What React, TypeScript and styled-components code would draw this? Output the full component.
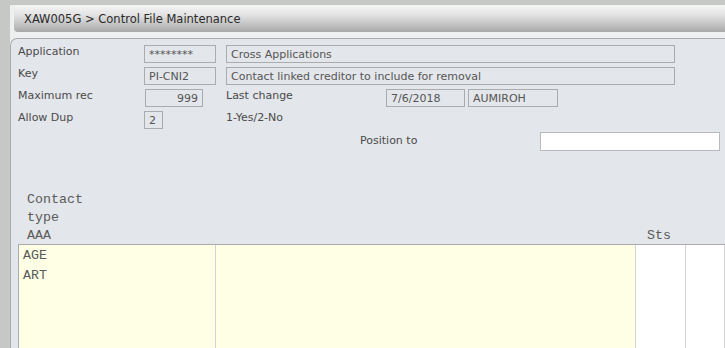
import React from 'react';
import styled, { createGlobalStyle } from 'styled-components';

const GlobalStyle = createGlobalStyle`
    html, body {
        margin: 0;
        height: 100%;
        overflow: hidden;
        background: #c6c8c6;
    }
`

const Page = styled.div`
    height: 100vh;
    padding: 5px 0 0 10px;
    box-sizing: border-box;
    display: flex;
    flex-direction: column;
    font-family: 'DejaVu Sans', Verdana, sans-serif;
    font-size: 11px;
    color: #4a4a4a;
`

const Screen = styled.div`
    flex: 1;
    display: flex;
    flex-direction: column;
    background: #eef0f0;
    min-height: 0;
`

const TitleBar = styled.div`
    height: 27px;
    margin-left: 4px;
    padding-left: 10px;
    display: flex;
    align-items: center;
    border-radius: 4px 0 0 4px;
    background: linear-gradient(#f5f5f5 0%, #e4e4e4 35%, #bcbcbc 80%, #a8a8a8 100%);
    color: #2a2a2a;
    font-size: 11.5px;
`

const Panel = styled.div`
    flex: 1;
    margin-top: 6px;
    border: 1px solid #a9abad;
    border-right: none;
    border-bottom: none;
    border-radius: 7px 0 0 0;
    background: #e3e6ea;
    padding: 6px 0 0 7px;
    display: flex;
    flex-direction: column;
    min-height: 0;
`

const Row = styled.div`
    display: flex;
    align-items: flex-start;
    height: 22px;
`

const Label = styled.div<{ $w: number; $gap?: number }>`
    width: ${p => p.$w}px;
    margin-left: ${p => p.$gap ?? 0}px;
    flex-shrink: 0;
    line-height: 14px;
`

const Field = styled.div<{ $w: number; $right?: boolean; $gap?: number; $white?: boolean }>`
    width: ${p => p.$w}px;
    height: ${p => (p.$white ? 19 : 18)}px;
    margin-left: ${p => p.$gap ?? 0}px;
    box-sizing: border-box;
    flex-shrink: 0;
    border: 1px solid ${p => (p.$white ? '#b8bbbe' : '#a9abad')};
    background: ${p => (p.$white ? '#ffffff' : '#e3e6ea')};
    color: #555;
    padding: 0 4px;
    display: flex;
    align-items: center;
    justify-content: ${p => (p.$right ? 'flex-end' : 'flex-start')};
`

const PositionRow = styled(Row)`
    margin-top: -2px;
    padding-left: 342px;
    align-items: center;
    height: 20px;
`

const Header = styled.div`
    margin-top: 40px;
    display: grid;
    grid-template-columns: 198px 420px 50px 1fr;
    font-family: 'Liberation Mono', 'Courier New', monospace;
    font-size: 13.3px;
    line-height: 18px;
    color: #5a5a5a;
    margin-left: 1px;
`

const HeadCell = styled.div<{ $pad: number }>`
    padding-left: ${p => p.$pad}px;
    display: flex;
    flex-direction: column;
    justify-content: flex-end;
`

const Grid = styled.div`
    flex: 1;
    margin-top: -1px;
    border-top: 1px solid #a9abad;
    border-left: 1px solid #a9abad;
    display: flex;
    flex-direction: column;
    background: #fff;
    font-family: 'Liberation Mono', 'Courier New', monospace;
    font-size: 13.3px;
    color: #5a5a5a;
    min-height: 0;
    overflow: hidden;
`

const GridRow = styled.div<{ $fill?: boolean }>`
    display: grid;
    grid-template-columns: 197px 420px 50px 1fr;
    height: ${p => (p.$fill ? 'auto' : '20px')};
    flex: ${p => (p.$fill ? 1 : 'none')};
`

const Cell = styled.div<{ $yellow?: boolean }>`
    background: ${p => (p.$yellow ? '#ffffe5' : '#ffffff')};
    border-right: 1px solid #d3d3d3;
    padding-left: 4px;
    display: flex;
    align-items: center;
`

const rows = ['AGE', 'ART'];

export default function App() {
    return (
        <>
            <GlobalStyle />
            <Page>
                <Screen>
                    <TitleBar>XAW005G &gt; Control File Maintenance</TitleBar>
                    <Panel>
                        <Row>
                            <Label $w={126}>Application</Label>
                            <Field $w={72}>********</Field>
                            <Field $w={449} $gap={10}>Cross Applications</Field>
                        </Row>
                        <Row>
                            <Label $w={126}>Key</Label>
                            <Field $w={72}>PI-CNI2</Field>
                            <Field $w={449} $gap={10}>Contact linked creditor to include for removal</Field>
                        </Row>
                        <Row>
                            <Label $w={127}>Maximum rec</Label>
                            <Field $w={58} $right>999</Field>
                            <Label $w={160} $gap={23}>Last change</Label>
                            <Field $w={79}>7/6/2018</Field>
                            <Field $w={90} $gap={3}>AUMIROH</Field>
                        </Row>
                        <Row>
                            <Label $w={126}>Allow Dup</Label>
                            <Field $w={19}>2</Field>
                            <Label $w={120} $gap={63}>1-Yes/2-No</Label>
                        </Row>
                        <PositionRow>
                            <Label $w={180}>Position to</Label>
                            <Field $w={180} $white />
                        </PositionRow>
                        <Header>
                            <HeadCell $pad={8}>
                                <span>Contact</span>
                                <span>type</span>
                                <span>AAA</span>
                            </HeadCell>
                            <HeadCell $pad={0} />
                            <HeadCell $pad={10}>
                                <span>Sts</span>
                            </HeadCell>
                            <HeadCell $pad={0} />
                        </Header>
                        <Grid>
                            {rows.map(r => (
                                <GridRow key={r}>
                                    <Cell $yellow>{r}</Cell>
                                    <Cell $yellow />
                                    <Cell />
                                    <Cell />
                                </GridRow>
                            ))}
                            <GridRow $fill>
                                <Cell $yellow />
                                <Cell $yellow />
                                <Cell />
                                <Cell />
                            </GridRow>
                        </Grid>
                    </Panel>
                </Screen>
            </Page>
        </>
    );
}
